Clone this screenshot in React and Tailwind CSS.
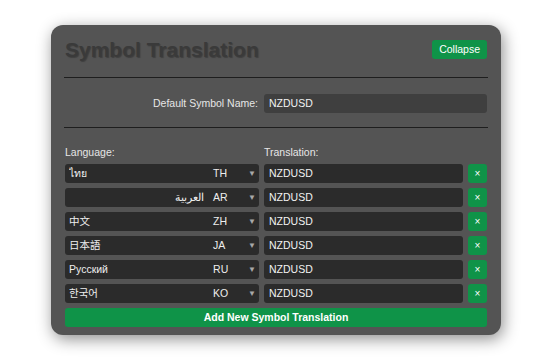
import React, { useState } from 'react';

const LANGS = [
    { name: 'ไทย', code: 'TH' },
    { name: 'العربية', code: 'AR', rtl: true },
    { name: '中文', code: 'ZH' },
    { name: '日本語', code: 'JA' },
    { name: 'Русский', code: 'RU' },
    { name: '한국어', code: 'KO' },
];

const font = { fontFamily: '"Liberation Sans", Arial, "Noto Sans", "Noto Sans CJK SC", "Noto Sans CJK JP", "Noto Sans CJK KR", sans-serif' };

// Satu baris terjemahan
const TranslationRow = ({ item, onRemove }) => (
    <div className="flex items-center gap-[5px] h-[19px]">
        <div className="w-[194px] h-full flex items-center bg-[#2b2b2b] rounded-[3px] pl-[4px] pr-[3px] text-[#eeeeee]">
            <span className={`flex-1 truncate ${item.rtl ? 'text-right pr-[9px]' : ''}`}>{item.name}</span>
            <span className="w-[35px]">{item.code}</span>
            <span className="text-[8px] text-[#a8a8a8] leading-none">▼</span>
        </div>
        <div className="flex-1 h-full flex items-center bg-[#2b2b2b] rounded-[3px] px-[5px] text-[#f2f2f2]">NZDUSD</div>
        <button onClick={onRemove} className="w-[19px] h-[19px] flex items-center justify-center bg-[#0f9348] rounded-[3px] text-white text-[10px] leading-none">×</button>
    </div>
);

export default function App() {
    const [rows, setRows] = useState(LANGS);

    return (
        <div className="min-h-screen bg-white pt-[25px]" style={font}>
            <div className="mx-auto w-[450px] h-[310px] bg-[#545454] rounded-[12px] px-[14px] pt-[15px] shadow-[2px_4px_16px_rgba(0,0,0,0.45)] text-[10.5px]">
                <div className="flex items-center justify-between h-[19px]">
                    <h1 className="text-[21px] font-bold text-[#3a3a3a] leading-none [text-shadow:1px_1px_1px_rgba(0,0,0,0.25)]">Symbol Translation</h1>
                    <button className="h-[19px] px-[7px] bg-[#0f9348] rounded-[3px] text-white text-[10.5px]">Collapse</button>
                </div>
                <div className="mt-[18px] -mx-px border-t border-[#1e1e1e]"></div>

                <div className="mt-[16px] flex items-center gap-[6px] h-[19px]">
                    <label className="w-[193px] text-right text-[#e6e6e6]">Default Symbol Name:</label>
                    <div className="flex-1 h-full flex items-center bg-[#3f3f3f] rounded-[3px] px-[5px] text-[#f2f2f2]">NZDUSD</div>
                </div>
                <div className="mt-[14px] -mx-px border-t border-[#1e1e1e]"></div>

                <div className="mt-[19px] flex h-[12px] items-center text-[#e6e6e6]">
                    <span className="w-[199px]">Language:</span>
                    <span>Translation:</span>
                </div>

                <div className="mt-[5px] flex flex-col gap-[5px]">
                    {rows.map(item => (
                        <TranslationRow key={item.code} item={item} onRemove={() => setRows(r => r.filter(x => x.code !== item.code))} />
                    ))}
                    <button className="h-[19px] w-full bg-[#0f9348] rounded-[3px] text-white font-bold text-[10.5px]">Add New Symbol Translation</button>
                </div>
            </div>
        </div>
    );
}
